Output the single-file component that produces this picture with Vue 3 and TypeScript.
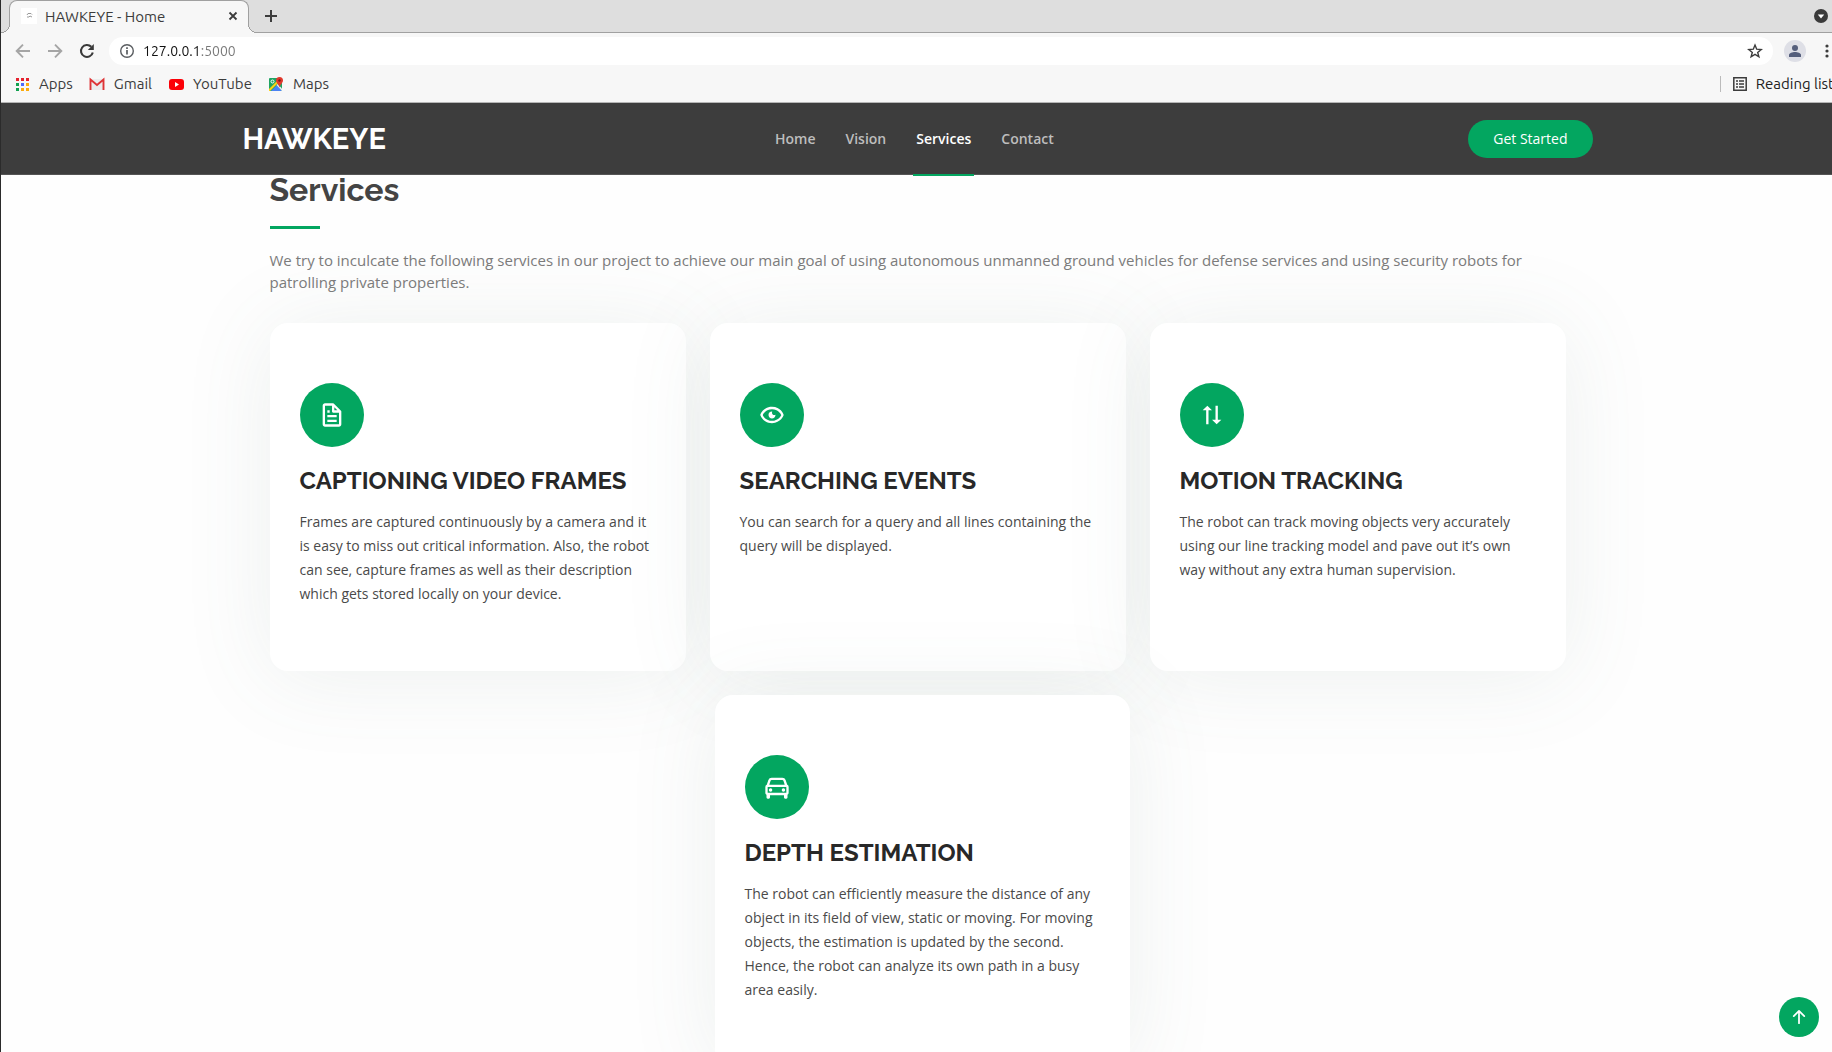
<script setup lang="ts">
import { ref } from 'vue'

interface Service {
  title: string
  text: string
  icon: string
}

const address = ref('127.0.0.1:5000')

const navLinks = [
  { label: 'Home', active: false },
  { label: 'Vision', active: false },
  { label: 'Services', active: true },
  { label: 'Contact', active: false },
]

const rows: Service[][] = [
  [
    {
      title: 'Captioning Video Frames',
      text: 'Frames are captured continuously by a camera and it is easy to miss out critical information. Also, the robot can see, capture frames as well as their description which gets stored locally on your device.',
      icon: 'M19.903 8.586a.997.997 0 0 0-.196-.293l-6-6a.997.997 0 0 0-.293-.196c-.03-.014-.062-.022-.094-.033a.991.991 0 0 0-.259-.051C13.04 2.011 13.021 2 13 2H6c-1.103 0-2 .897-2 2v16c0 1.103.897 2 2 2h12c1.103 0 2-.897 2-2V9c0-.021-.011-.04-.013-.062a.952.952 0 0 0-.051-.259c-.01-.032-.019-.063-.033-.093zM16.586 8H14V5.414L16.586 8zM6 20V4h6v5a1 1 0 0 0 1 1h5l.002 10H6zM8 12h8v2H8zm0 4h8v2H8zm0-8h2v2H8z',
    },
    {
      title: 'Searching Events',
      text: 'You can search for a query and all lines containing the query will be displayed.',
      icon: 'M14 12c-1.095 0-2-.905-2-2 0-.354.103-.683.268-.973C12.178 9.02 12.092 9 12 9a3.02 3.02 0 0 0-3 3c0 1.642 1.358 3 3 3 1.641 0 3-1.358 3-3 0-.092-.02-.178-.027-.268-.29.165-.619.268-.973.268zM12 5c-7.633 0-9.927 6.617-9.948 6.684L1.946 12l.105.316C2.073 12.383 4.367 19 12 19s9.927-6.617 9.948-6.684l.106-.316-.105-.316C21.927 11.617 19.633 5 12 5zm0 12c-5.351 0-7.424-3.846-7.926-5C4.578 10.842 6.652 7 12 7c5.351 0 7.424 3.846 7.926 5-.504 1.158-2.578 5-7.926 5z',
    },
    {
      title: 'Motion Tracking',
      text: 'The robot can track moving objects very accurately using our line tracking model and pave out it’s own way without any extra human supervision.',
      icon: 'M7 20h2V8h3L8 4 4 8h3zm13-4h-3V4h-2v12h-3l4 4z',
    },
  ],
  [
    {
      title: 'Depth Estimation',
      text: 'The robot can efficiently measure the distance of any object in its field of view, static or moving. For moving objects, the estimation is updated by the second. Hence, the robot can analyze its own path in a busy area easily.',
      icon: 'm20.772 10.156-1.368-4.105A2.995 2.995 0 0 0 16.559 4H7.441a2.995 2.995 0 0 0-2.845 2.051l-1.368 4.105A2.003 2.003 0 0 0 2 12v5c0 .753.423 1.402 1.039 1.743-.013.066-.039.126-.039.195V21a1 1 0 0 0 1 1h1a1 1 0 0 0 1-1v-2h12v2a1 1 0 0 0 1 1h1a1 1 0 0 0 1-1v-2.062c0-.069-.026-.13-.039-.195A1.993 1.993 0 0 0 22 17v-5c0-.829-.508-1.541-1.228-1.844zM4 17v-5h16l.002 5H4zM7.441 6h9.117c.431 0 .813.274.949.684L18.613 10H5.387l1.105-3.316A1 1 0 0 1 7.441 6zM5 14.5a1.5 1.5 0 1 0 3 0 1.5 1.5 0 1 0-3 0zM16 14.5a1.5 1.5 0 1 0 3 0 1.5 1.5 0 1 0-3 0z',
    },
  ],
]
</script>

<template>
  <div class="screen">
    <div class="browser">
      <div class="tab-strip">
        <div class="tab">
          <svg class="favicon" width="16" height="16" viewBox="0 0 16 16">
            <rect width="16" height="16" fill="#fff" />
            <path d="M6 7l1-1.500h3l1 1M6 9h2l1-1 2 1" fill="none" stroke="#999" stroke-width="1" />
          </svg>
          <span class="tab-title">HAWKEYE - Home</span>
          <button class="plain" type="button" aria-label="Close tab">
            <svg width="16" height="16" viewBox="0 0 16 16"><path d="M4.500 4.500l7 7m0-7l-7 7" stroke="#3c3c3c" stroke-width="1.800" /></svg>
          </button>
        </div>
        <button class="plain new-tab" type="button" aria-label="New tab">
          <svg width="16" height="16" viewBox="0 0 16 16"><path d="M8 2v12M2 8h12" stroke="#3c3c3c" stroke-width="2" /></svg>
        </button>
        <button class="plain tab-search" type="button" aria-label="Search tabs">
          <svg width="16" height="16" viewBox="0 0 16 16"><circle cx="8" cy="8" r="7" fill="#3a3a3a" /><path d="M4.800 6.500h6.400L8 10.500z" fill="#fff" /></svg>
        </button>
      </div>

      <div class="toolbar">
        <button class="plain" type="button" aria-label="Back">
          <svg width="16" height="16" viewBox="0 0 16 16"><path d="M15 8H2.500M8 1.700L1.700 8 8 14.300" fill="none" stroke="#a5a5a5" stroke-width="1.900" /></svg>
        </button>
        <button class="plain" type="button" aria-label="Forward">
          <svg width="16" height="16" viewBox="0 0 16 16"><path d="M1 8h12.500M8 1.700L14.300 8 8 14.300" fill="none" stroke="#a5a5a5" stroke-width="1.900" /></svg>
        </button>
        <button class="plain" type="button" aria-label="Reload">
          <svg width="16" height="16" viewBox="0 0 16 16"><path d="M13.800 9.500A6 6 0 1 1 12.300 3.800" fill="none" stroke="#3a3a3a" stroke-width="2.100" /><path d="M14.800 1v6h-6z" fill="#3a3a3a" /></svg>
        </button>
        <div class="omnibox">
          <svg width="16" height="16" viewBox="0 0 16 16"><circle cx="8" cy="8" r="6.300" fill="none" stroke="#5a5d61" stroke-width="1.400" /><path d="M8 7v4.500M8 4.300V6" stroke="#5a5d61" stroke-width="1.700" /></svg>
          <input v-model="address" class="address" type="text" aria-label="Address" />
          <button class="plain" type="button" aria-label="Bookmark this page">
            <svg width="16" height="16" viewBox="0 0 16 16"><path d="M8 2l1.700 4.200 4.500.3-3.500 2.900 1.200 4.400L8 11.400l-3.900 2.400 1.200-4.400L1.800 6.500l4.500-.3z" fill="none" stroke="#3c3c3c" stroke-width="1.400" /></svg>
          </button>
        </div>
        <button class="plain" type="button" aria-label="Profile">
          <svg width="22" height="22" viewBox="0 0 22 22"><circle cx="11" cy="11" r="11" fill="#dedfe6" /><circle cx="11" cy="8" r="3" fill="#555f7c" /><path d="M5 17v-2c0-2 3.500-3 6-3s6 1 6 3v2z" fill="#555f7c" /></svg>
        </button>
        <button class="plain menu" type="button" aria-label="Menu">
          <svg width="4" height="16" viewBox="0 0 4 16"><g fill="#3c3c3c"><circle cx="2" cy="3" r="1.600" /><circle cx="2" cy="8" r="1.600" /><circle cx="2" cy="13" r="1.600" /></g></svg>
        </button>
      </div>

      <div class="bookmarks">
        <a class="bookmark" href="#">
          <svg width="16" height="16" viewBox="0 0 16 16">
            <path d="M2 2h3v3H2zm5 0h3v3H7zm5 0h3v3h-3z" fill="#e5222e" />
            <path d="M2 7h3v3H2zm0 5h3v3H2z" fill="#12a150" />
            <path d="M7 7h3v3H7z" fill="#4b6bfb" />
            <path d="M12 7h3v3h-3zm-5 5h3v3H7zm5 0h3v3h-3z" fill="#fbab0c" />
          </svg>Apps</a>
        <a class="bookmark" href="#">
          <svg width="16" height="16" viewBox="0 0 16 16"><path d="M2 3h12v11H2z" fill="#ececec" /><path d="M1.500 14V3.500L8 9l6.500-5.500V14" fill="none" stroke="#de3436" stroke-width="1.900" /></svg>Gmail</a>
        <a class="bookmark" href="#">
          <svg width="16" height="16" viewBox="0 0 16 16"><rect x="1" y="3" width="15" height="11" rx="3" fill="#fb0007" /><path d="M7 6l4 2.500L7 11z" fill="#fff" /></svg>YouTube</a>
        <a class="bookmark" href="#">
          <svg width="16" height="16" viewBox="0 0 16 16">
            <rect x="1" y="2" width="13" height="13" rx="1" fill="#1fa463" />
            <path d="M3 15l6-6 5 6z" fill="#4a83f4" /><path d="M1 13l8-8 1 2-8 8H1z" fill="#fcd116" /><path d="M9.500 8l4.500 4.500V15L8.500 9z" fill="#eee" />
            <circle cx="4.500" cy="5.500" r="1.500" fill="none" stroke="#fff" />
            <path d="M11.500 1a3.500 3.500 0 0 1 3.500 3.500c0 2.500-2.500 3-3.500 7-1-4-3.500-4.500-3.500-7A3.500 3.500 0 0 1 11.500 1z" fill="#e2382c" /><circle cx="11.500" cy="4.500" r="1.200" fill="#7b1a14" />
          </svg>Maps</a>
        <button class="plain reading" type="button">
          <svg width="16" height="16" viewBox="0 0 16 16"><path d="M1.800 1.800h12.400v12.400H1.800z" fill="none" stroke="#3c3c3c" stroke-width="1.500" /><path d="M4 5h2m1 0h5M4 8h2m1 0h5M4 11h2m1 0h5" stroke="#3c3c3c" stroke-width="1.500" /></svg>Reading list</button>
      </div>

      <header class="site-header">
        <div class="header-inner">
          <a class="logo" href="#">HAWKEYE</a>
          <nav class="nav">
            <a v-for="link in navLinks" :key="link.label" href="#" class="nav-link" :class="{ active: link.active }">{{ link.label }}</a>
          </nav>
          <a class="get-started" href="#">Get Started</a>
        </div>
      </header>

      <main class="services">
        <div class="section-title">
          <h2>Services</h2>
          <p>We try to inculcate the following services in our project to achieve our main goal of using autonomous unmanned ground vehicles for defense services and using security robots for patrolling private properties.</p>
        </div>
        <div v-for="(row, i) in rows" :key="i" class="card-row" :class="{ last: i > 0 }">
          <article v-for="service in row" :key="service.title" class="card">
            <div class="card-icon">
              <svg width="28" height="28" viewBox="0 0 24 24"><path :d="service.icon" fill="#fff" /></svg>
            </div>
            <h4>{{ service.title }}</h4>
            <p>{{ service.text }}</p>
          </article>
        </div>
      </main>

      <a class="back-to-top" href="#" aria-label="Back to top">
        <svg width="28" height="28" viewBox="0 0 16 16"><path d="M8 12a.5.5 0 0 0 .5-.5V5.707l2.146 2.147a.5.5 0 0 0 .708-.708l-3-3a.5.5 0 0 0-.708 0l-3 3a.5.5 0 1 0 .708.708L7.500 5.707V11.500a.5.5 0 0 0 .5.5z" fill="#fff" /></svg>
      </a>
    </div>
  </div>
</template>

<style>
body {
  margin: 0;
}
</style>

<style scoped>
* {
  box-sizing: border-box;
}

.screen {
  height: 100vh;
  overflow: hidden;
  background: #2b2b2b;
}

.browser {
  position: relative;
  display: flex;
  flex-direction: column;
  height: 100%;
  margin: 0 -2px 0 1px;
  background: #fefefe;
  font-family: "Open Sans", "Noto Sans", sans-serif;
}

svg {
  display: block;
  flex: none;
}

a {
  text-decoration: none;
}

.plain {
  display: flex;
  align-items: center;
  padding: 0;
  border: 0;
  background: none;
}

.tab-strip,
.toolbar,
.bookmarks {
  display: flex;
  flex: none;
  align-items: center;
  font: 15px Ubuntu, "Noto Sans", sans-serif;
  color: #3c3c3c;
  background: #f7f7f7;
}

.tab-strip {
  height: 33px;
  padding: 0 5px 0 8px;
  border-bottom: 1px solid #a0a0a0;
  background: #dedede;
}

.tab {
  position: relative;
  display: flex;
  align-items: center;
  align-self: flex-start;
  width: 240px;
  height: 33px;
  padding: 0 7px 2px 11px;
  border: 1px solid #a0a0a0;
  border-bottom: 0;
  border-radius: 8px 8px 0 0;
  background: #f7f7f7;
}

/* Curved feet that join the tab to the toolbar */
.tab::before,
.tab::after {
  content: "";
  position: absolute;
  bottom: 0;
  width: 9px;
  height: 9px;
}

.tab::before {
  left: -9px;
  background: radial-gradient(circle at 0 0, #dedede 8px, #a0a0a0 8px 9px, #f7f7f7 9px);
}

.tab::after {
  right: -9px;
  background: radial-gradient(circle at 100% 0, #dedede 8px, #a0a0a0 8px 9px, #f7f7f7 9px);
}

.tab-title {
  flex: 1;
  margin-left: 8px;
}

.new-tab {
  margin-left: 14px;
}

.tab-search {
  margin-left: auto;
}

.toolbar {
  gap: 16px;
  height: 36px;
  padding: 0 5px 0 14px;
}

.omnibox {
  display: flex;
  flex: 1;
  align-items: center;
  height: 28px;
  margin: 0 -5px 0 -2px;
  padding: 0 10px;
  border-radius: 14px;
  background: #fff;
}

.address {
  flex: 1;
  min-width: 0;
  margin-left: 8px;
  padding: 0;
  border: 0;
  outline: 0;
  font: 14px Ubuntu, "Noto Sans", sans-serif;
  color: transparent;
  background: linear-gradient(90deg, #111 56px, #777 56px);
  background-clip: text;
}

.menu {
  margin-left: 3px;
}

.bookmarks {
  height: 34px;
  padding: 0 0 4px 13px;
  border-bottom: 1px solid #b5b5b5;
}

.bookmark {
  display: flex;
  align-items: center;
  gap: 9px;
  margin-right: 16px;
  color: #3c3c3c;
}

.reading {
  gap: 8px;
  height: 16px;
  margin-left: auto;
  padding-left: 11px;
  border-left: 1px solid #bbb;
  font: inherit;
  color: #222;
}

.site-header {
  position: relative;
  flex: none;
  height: 72px;
  border-bottom: 1px solid #555;
  background: #3d3d3d;
}

.header-inner {
  display: flex;
  align-items: center;
  justify-content: space-between;
  max-width: 1350px;
  height: 100%;
  margin: 0 auto;
}

.logo {
  width: 142px;
  font: 700 29px Raleway, Lato, sans-serif;
  color: #fff;
}

.nav {
  display: flex;
  gap: 24px;
  height: 100%;
  margin-right: 24px;
}

.nav-link {
  position: relative;
  display: flex;
  align-items: center;
  padding: 0 3px;
  font-size: 14px;
  font-weight: 600;
  color: #bdbdbd;
}

.nav-link.active {
  color: #fff;
}

.nav-link.active::after {
  content: "";
  position: absolute;
  right: 0;
  bottom: -2px;
  left: 0;
  height: 2px;
  background: #03a660;
}

.get-started {
  padding: 9px 25px;
  border-radius: 19px;
  font-size: 14px;
  line-height: 20px;
  color: #fff;
  background: #03a660;
}

.services {
  width: 100%;
  max-width: 1320px;
  margin: 0 auto;
  padding: 0 12px;
}

.section-title h2 {
  margin: 0;
  padding-bottom: 20px;
  font: 700 32px/30px Raleway, Lato, sans-serif;
  color: #444;
}

.section-title h2::after {
  content: "";
  display: block;
  width: 50px;
  height: 3px;
  margin-top: 21px;
  background: #03a660;
}

.section-title p {
  margin: 0 0 30px;
  font-size: 15px;
  line-height: 22px;
  color: #7c7c7c;
}

.card-row {
  display: grid;
  grid-template-columns: repeat(3, 1fr);
  gap: 24px;
  margin-bottom: 24px;
}

.card-row.last {
  padding-left: 10px;
  grid-template-columns: calc((100% - 38px) / 3);
  justify-content: center;
}

.card {
  padding: 60px 30px 65px;
  border-radius: 18px;
  background: #fff;
  box-shadow: 0 5px 90px rgba(90, 115, 105, 0.1);
}

.card-icon {
  display: flex;
  align-items: center;
  justify-content: center;
  width: 64px;
  height: 64px;
  border-radius: 50%;
  background: #03a660;
}

.card h4 {
  margin: 19px 0 15px;
  font: 700 24px/29px Raleway, Lato, sans-serif;
  text-transform: uppercase;
  color: #282828;
}

.card p {
  margin: 0;
  font-size: 14px;
  line-height: 24px;
  color: #4a4a4a;
}

.back-to-top {
  position: absolute;
  right: 15px;
  bottom: 15px;
  display: flex;
  align-items: center;
  justify-content: center;
  width: 40px;
  height: 40px;
  border-radius: 50%;
  background: #03a660;
}
</style>
